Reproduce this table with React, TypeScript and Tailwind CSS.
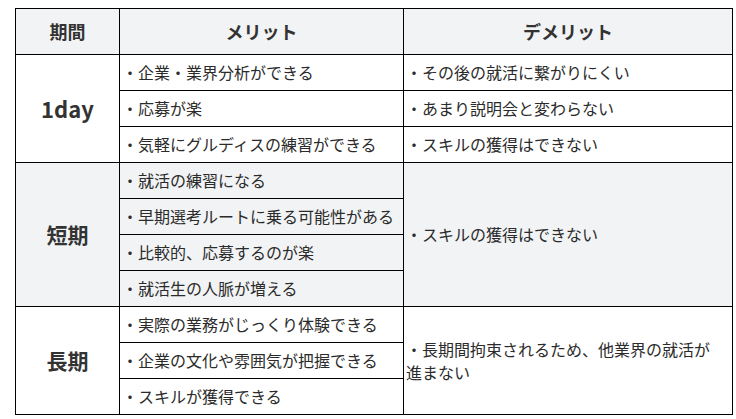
import React from "react";

const font = { fontFamily: '"Noto Sans CJK JP", "Noto Sans", sans-serif' };

export default function App() {
  const td = "border border-black pl-[2px] pr-1 text-[16px] leading-[23px] text-[#2b2b2b] align-middle";
  const head = "border border-black text-[18px] font-bold text-[#333] text-center h-[46px] bg-[#f2f3f5]";
  const left = "border border-black text-[21px] font-bold text-[#333] text-center align-middle";
  return (
    <div className="w-[736px] h-[419px] bg-white pt-[8px] pl-[15px]" style={font}>
      <table className="border-collapse table-fixed w-[717px]">
        <colgroup>
          <col className="w-[104px]" />
          <col className="w-[284px]" />
          <col className="w-[329px]" />
        </colgroup>
        <thead>
          <tr>
            <th className={head}>期間</th>
            <th className={head}>メリット</th>
            <th className={head}>デメリット</th>
          </tr>
        </thead>
        <tbody>
          <tr className="h-[36px]">
            <td rowSpan={3} className={left}>
              <span className="text-[22px]">1day</span>
            </td>
            <td className={td}>・企業・業界分析ができる</td>
            <td className={td}>・その後の就活に繋がりにくい</td>
          </tr>
          <tr className="h-[36px]">
            <td className={td}>・応募が楽</td>
            <td className={td}>・あまり説明会と変わらない</td>
          </tr>
          <tr className="h-[36px]">
            <td className={td}>・気軽にグルディスの練習ができる</td>
            <td className={td}>・スキルの獲得はできない</td>
          </tr>
          <tr className="h-[36px] bg-[#f2f3f5]">
            <td rowSpan={4} className={left}>短期</td>
            <td className={td}>・就活の練習になる</td>
            <td rowSpan={4} className={td}>・スキルの獲得はできない</td>
          </tr>
          <tr className="h-[36px] bg-[#f2f3f5]">
            <td className={td}>・早期選考ルートに乗る可能性がある</td>
          </tr>
          <tr className="h-[36px] bg-[#f2f3f5]">
            <td className={td}>・比較的、応募するのが楽</td>
          </tr>
          <tr className="h-[36px] bg-[#f2f3f5]">
            <td className={td}>・就活生の人脈が増える</td>
          </tr>
          <tr className="h-[36px]">
            <td rowSpan={3} className={left}>長期</td>
            <td className={td}>・実際の業務がじっくり体験できる</td>
            <td rowSpan={3} className={`${td} !pr-[16px]`}>・長期間拘束されるため、他業界の就活が進まない</td>
          </tr>
          <tr className="h-[36px]">
            <td className={td}>・企業の文化や雰囲気が把握できる</td>
          </tr>
          <tr className="h-[36px]">
            <td className={td}>・スキルが獲得できる</td>
          </tr>
        </tbody>
      </table>
    </div>
  );
}
